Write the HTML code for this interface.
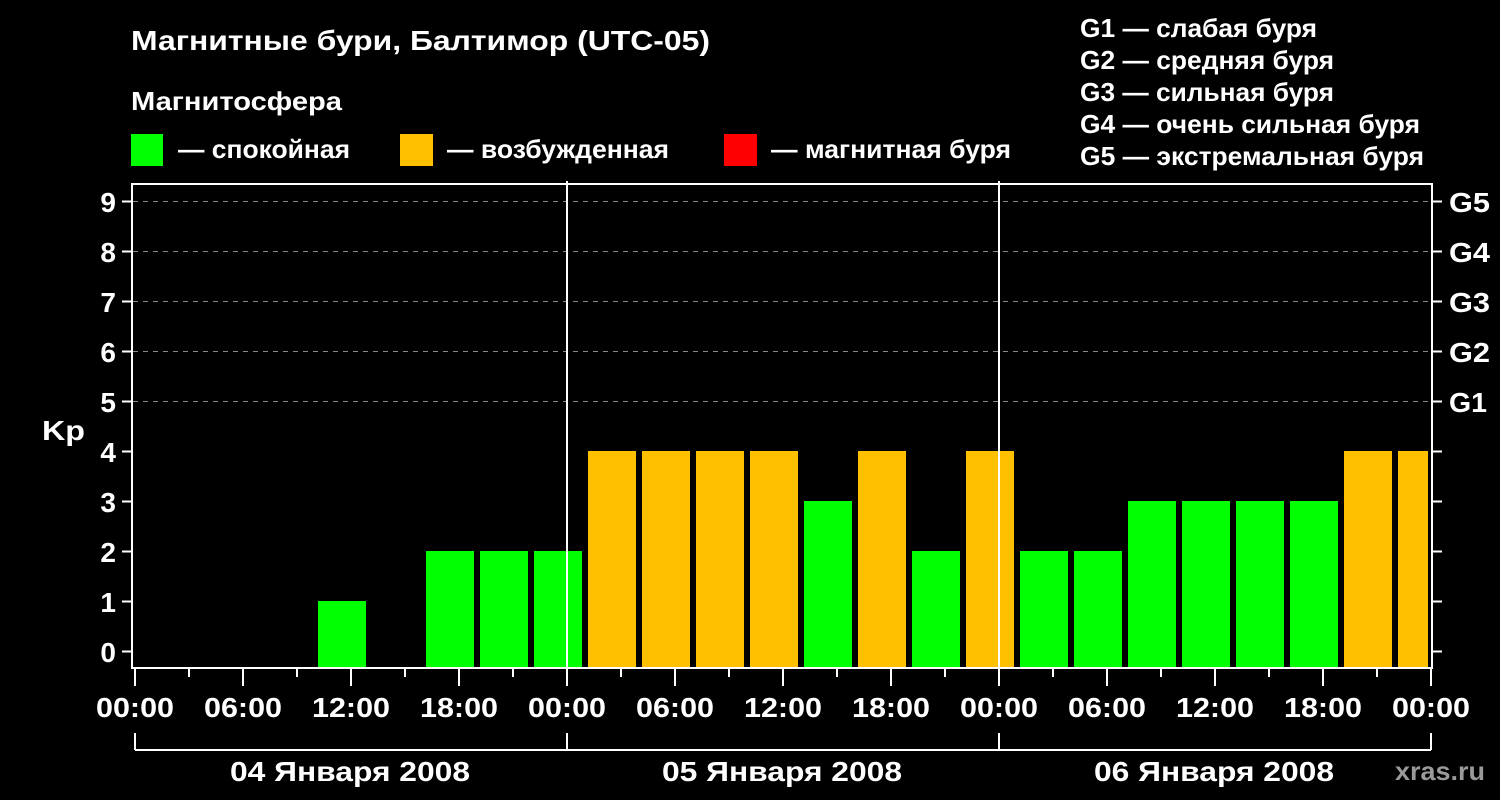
<!DOCTYPE html>
<html><head><meta charset="utf-8"><style>
html,body{margin:0;padding:0;background:#000;}
svg{display:block}
text{font-family:"Liberation Sans",sans-serif;font-weight:bold;fill:#fff}
</style></head><body>
<svg width="1500" height="800" viewBox="0 0 1500 800" xmlns="http://www.w3.org/2000/svg">
<rect width="1500" height="800" fill="#000"/>
<text x="131" y="50" font-size="28" textLength="579" lengthAdjust="spacingAndGlyphs">Магнитные бури, Балтимор (UTC-05)</text>
<text x="131" y="110" font-size="26" textLength="211" lengthAdjust="spacingAndGlyphs">Магнитосфера</text>
<rect x="131" y="134" width="32" height="32" fill="#00ff00"/>
<text x="178" y="158" font-size="26" textLength="172" lengthAdjust="spacingAndGlyphs">— спокойная</text>
<rect x="400" y="134" width="33" height="32" fill="#ffc000"/>
<text x="447" y="158" font-size="26" textLength="222" lengthAdjust="spacingAndGlyphs">— возбужденная</text>
<rect x="724" y="134" width="33" height="32" fill="#ff0000"/>
<text x="771" y="158" font-size="26" textLength="240" lengthAdjust="spacingAndGlyphs">— магнитная буря</text>
<g font-size="26">
<text x="1080" y="37" textLength="237" lengthAdjust="spacingAndGlyphs">G1 — слабая буря</text>
<text x="1080" y="69" textLength="254" lengthAdjust="spacingAndGlyphs">G2 — средняя буря</text>
<text x="1080" y="101" textLength="254" lengthAdjust="spacingAndGlyphs">G3 — сильная буря</text>
<text x="1080" y="133" textLength="340" lengthAdjust="spacingAndGlyphs">G4 — очень сильная буря</text>
<text x="1080" y="165" textLength="344" lengthAdjust="spacingAndGlyphs">G5 — экстремальная буря</text>
</g>
<g stroke="#888" stroke-width="1" stroke-dasharray="5,5">
<line x1="133" y1="201.5" x2="1431" y2="201.5"/>
<line x1="133" y1="251.5" x2="1431" y2="251.5"/>
<line x1="133" y1="301.5" x2="1431" y2="301.5"/>
<line x1="133" y1="351.5" x2="1431" y2="351.5"/>
<line x1="133" y1="401.5" x2="1431" y2="401.5"/>
</g>
<g>
<rect x="318" y="601" width="48" height="67" fill="#00ff00"/>
<rect x="426" y="551" width="48" height="117" fill="#00ff00"/>
<rect x="480" y="551" width="48" height="117" fill="#00ff00"/>
<rect x="534" y="551" width="48" height="117" fill="#00ff00"/>
<rect x="588" y="451" width="48" height="217" fill="#ffc000"/>
<rect x="642" y="451" width="48" height="217" fill="#ffc000"/>
<rect x="696" y="451" width="48" height="217" fill="#ffc000"/>
<rect x="750" y="451" width="48" height="217" fill="#ffc000"/>
<rect x="804" y="501" width="48" height="167" fill="#00ff00"/>
<rect x="858" y="451" width="48" height="217" fill="#ffc000"/>
<rect x="912" y="551" width="48" height="117" fill="#00ff00"/>
<rect x="966" y="451" width="48" height="217" fill="#ffc000"/>
<rect x="1020" y="551" width="48" height="117" fill="#00ff00"/>
<rect x="1074" y="551" width="48" height="117" fill="#00ff00"/>
<rect x="1128" y="501" width="48" height="167" fill="#00ff00"/>
<rect x="1182" y="501" width="48" height="167" fill="#00ff00"/>
<rect x="1236" y="501" width="48" height="167" fill="#00ff00"/>
<rect x="1290" y="501" width="48" height="167" fill="#00ff00"/>
<rect x="1344" y="451" width="48" height="217" fill="#ffc000"/>
<rect x="1398" y="451" width="30" height="217" fill="#ffc000"/>
</g>
<rect x="132" y="184" width="1300" height="484" fill="none" stroke="#fff" stroke-width="2"/>
<g stroke="#fff" stroke-width="2">
<line x1="567" y1="181" x2="567" y2="668"/>
<line x1="999" y1="181" x2="999" y2="668"/>
</g>
<g stroke="#fff" stroke-width="2">
<line x1="122" y1="201.5" x2="131" y2="201.5"/><line x1="122" y1="251.5" x2="131" y2="251.5"/>
<line x1="122" y1="301.5" x2="131" y2="301.5"/><line x1="122" y1="351.5" x2="131" y2="351.5"/>
<line x1="122" y1="401.5" x2="131" y2="401.5"/><line x1="122" y1="451.5" x2="131" y2="451.5"/>
<line x1="122" y1="501.5" x2="131" y2="501.5"/><line x1="122" y1="551.5" x2="131" y2="551.5"/>
<line x1="122" y1="601.5" x2="131" y2="601.5"/><line x1="122" y1="651.5" x2="131" y2="651.5"/>
<line x1="1433" y1="201.5" x2="1442" y2="201.5"/><line x1="1433" y1="251.5" x2="1442" y2="251.5"/>
<line x1="1433" y1="301.5" x2="1442" y2="301.5"/><line x1="1433" y1="351.5" x2="1442" y2="351.5"/>
<line x1="1433" y1="401.5" x2="1442" y2="401.5"/><line x1="1433" y1="451.5" x2="1442" y2="451.5"/>
<line x1="1433" y1="501.5" x2="1442" y2="501.5"/><line x1="1433" y1="551.5" x2="1442" y2="551.5"/>
<line x1="1433" y1="601.5" x2="1442" y2="601.5"/><line x1="1433" y1="651.5" x2="1442" y2="651.5"/>
</g>
<g font-size="28" text-anchor="end">
<text x="116" y="212">9</text><text x="116" y="262">8</text><text x="116" y="312">7</text>
<text x="116" y="362">6</text><text x="116" y="412">5</text><text x="116" y="462">4</text>
<text x="116" y="512">3</text><text x="116" y="562">2</text><text x="116" y="612">1</text>
<text x="116" y="662">0</text>
</g>
<text x="42" y="440" font-size="28" textLength="43" lengthAdjust="spacingAndGlyphs">Kp</text>
<g font-size="28">
<text x="1449" y="212" textLength="41" lengthAdjust="spacingAndGlyphs">G5</text><text x="1449" y="262" textLength="41" lengthAdjust="spacingAndGlyphs">G4</text><text x="1449" y="312" textLength="41" lengthAdjust="spacingAndGlyphs">G3</text>
<text x="1449" y="362" textLength="41" lengthAdjust="spacingAndGlyphs">G2</text><text x="1449" y="412" textLength="38" lengthAdjust="spacingAndGlyphs">G1</text>
</g>
<g stroke="#fff" stroke-width="2">
<line x1="135" y1="669" x2="135" y2="686"/><line x1="189" y1="669" x2="189" y2="677"/>
<line x1="243" y1="669" x2="243" y2="686"/><line x1="297" y1="669" x2="297" y2="677"/>
<line x1="351" y1="669" x2="351" y2="686"/><line x1="405" y1="669" x2="405" y2="677"/>
<line x1="459" y1="669" x2="459" y2="686"/><line x1="513" y1="669" x2="513" y2="677"/>
<line x1="567" y1="669" x2="567" y2="686"/><line x1="621" y1="669" x2="621" y2="677"/>
<line x1="675" y1="669" x2="675" y2="686"/><line x1="729" y1="669" x2="729" y2="677"/>
<line x1="783" y1="669" x2="783" y2="686"/><line x1="837" y1="669" x2="837" y2="677"/>
<line x1="891" y1="669" x2="891" y2="686"/><line x1="945" y1="669" x2="945" y2="677"/>
<line x1="999" y1="669" x2="999" y2="686"/><line x1="1053" y1="669" x2="1053" y2="677"/>
<line x1="1107" y1="669" x2="1107" y2="686"/><line x1="1161" y1="669" x2="1161" y2="677"/>
<line x1="1215" y1="669" x2="1215" y2="686"/><line x1="1269" y1="669" x2="1269" y2="677"/>
<line x1="1323" y1="669" x2="1323" y2="686"/><line x1="1377" y1="669" x2="1377" y2="677"/>
<line x1="1431" y1="669" x2="1431" y2="686"/>
</g>
<g font-size="28">
<text x="96" y="717" textLength="78" lengthAdjust="spacingAndGlyphs">00:00</text>
<text x="204" y="717" textLength="78" lengthAdjust="spacingAndGlyphs">06:00</text>
<text x="312" y="717" textLength="78" lengthAdjust="spacingAndGlyphs">12:00</text>
<text x="420" y="717" textLength="78" lengthAdjust="spacingAndGlyphs">18:00</text>
<text x="528" y="717" textLength="78" lengthAdjust="spacingAndGlyphs">00:00</text>
<text x="636" y="717" textLength="78" lengthAdjust="spacingAndGlyphs">06:00</text>
<text x="744" y="717" textLength="78" lengthAdjust="spacingAndGlyphs">12:00</text>
<text x="852" y="717" textLength="78" lengthAdjust="spacingAndGlyphs">18:00</text>
<text x="960" y="717" textLength="78" lengthAdjust="spacingAndGlyphs">00:00</text>
<text x="1068" y="717" textLength="78" lengthAdjust="spacingAndGlyphs">06:00</text>
<text x="1176" y="717" textLength="78" lengthAdjust="spacingAndGlyphs">12:00</text>
<text x="1284" y="717" textLength="78" lengthAdjust="spacingAndGlyphs">18:00</text>
<text x="1392" y="717" textLength="78" lengthAdjust="spacingAndGlyphs">00:00</text>
</g>
<g stroke="#fff" stroke-width="2" fill="none">
<line x1="135" y1="750" x2="1431" y2="750"/>
<line x1="135" y1="733" x2="135" y2="750"/><line x1="567" y1="733" x2="567" y2="750"/>
<line x1="999" y1="733" x2="999" y2="750"/><line x1="1431" y1="733" x2="1431" y2="750"/>
</g>
<g font-size="28">
<text x="230" y="781" textLength="240" lengthAdjust="spacingAndGlyphs">04 Января 2008</text>
<text x="662" y="781" textLength="240" lengthAdjust="spacingAndGlyphs">05 Января 2008</text>
<text x="1094" y="781" textLength="240" lengthAdjust="spacingAndGlyphs">06 Января 2008</text>
</g>
<text x="1395" y="780" font-size="26" textLength="90" lengthAdjust="spacingAndGlyphs" style="fill:#9a9a9a">xras.ru</text>
</svg>
</body></html>
